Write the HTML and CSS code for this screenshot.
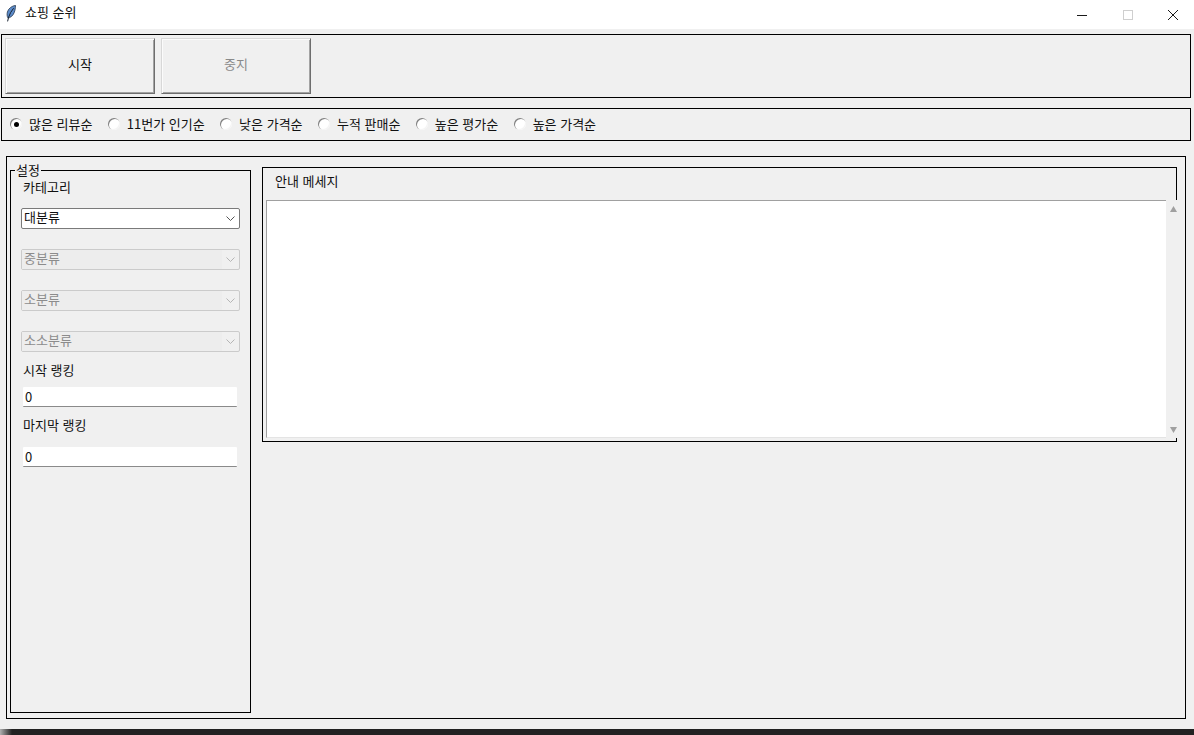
FILE: index.html
```html
<!DOCTYPE html>
<html lang="ko">
<head>
<meta charset="utf-8">
<title>쇼핑 순위</title>
<link rel="stylesheet" href="styles.css">
</head>
<body>
<div class="app">
  <header class="titlebar">
    <svg class="feather" viewBox="0 0 10 17" aria-hidden="true">
      <path class="feather-body" d="M9.5 0.4C6.2 0.8 2.4 3.2 1.4 7C0.9 9.2 1 11.2 1.8 12.8L3.6 12.6C6.6 11.2 8.2 8.4 8.9 5.4C9.3 3.4 9.6 1.6 9.5 0.4Z"/>
      <path class="feather-vein" d="M7.6 3.2L4.6 7.6L2.6 12.2L1.6 16.4"/>
    </svg>
    <span class="title">쇼핑 순위</span>
    <div class="winctl">
      <svg class="winicon winicon-min" viewBox="0 0 10 10" aria-hidden="true"><path class="icon-dark" d="M0 5.5H10"/></svg>
      <svg class="winicon" viewBox="0 0 10 10" aria-hidden="true"><rect class="icon-light" x="0.5" y="0.5" width="9" height="9"/></svg>
      <svg class="winicon" viewBox="0 0 10 10" aria-hidden="true"><path class="icon-dark" d="M0 0L10 10M10 0L0 10"/></svg>
    </div>
  </header>

  <section class="panel actions">
    <button class="btn" type="button">시작</button>
    <button class="btn btn-off" type="button">중지</button>
  </section>

  <section class="panel sorts">
    <label class="radio-item"><span class="radio radio-on"></span>많은 리뷰순</label>
    <label class="radio-item"><span class="radio"></span>11번가 인기순</label>
    <label class="radio-item"><span class="radio"></span>낮은 가격순</label>
    <label class="radio-item"><span class="radio"></span>누적 판매순</label>
    <label class="radio-item"><span class="radio"></span>높은 평가순</label>
    <label class="radio-item"><span class="radio"></span>높은 가격순</label>
  </section>

  <main class="panel workspace">
    <section class="settings">
      <span class="legend">설정</span>
      <div class="lbl">카테고리</div>
      <div class="combo combo-first"><span class="combo-text">대분류</span><span class="combo-arrow"><svg viewBox="0 0 9 5" aria-hidden="true"><path d="M0.5 0.5L4.5 4.5L8.5 0.5"/></svg></span></div>
      <div class="combo combo-off"><span class="combo-text">중분류</span><span class="combo-arrow"><svg viewBox="0 0 9 5" aria-hidden="true"><path d="M0.5 0.5L4.5 4.5L8.5 0.5"/></svg></span></div>
      <div class="combo combo-off"><span class="combo-text">소분류</span><span class="combo-arrow"><svg viewBox="0 0 9 5" aria-hidden="true"><path d="M0.5 0.5L4.5 4.5L8.5 0.5"/></svg></span></div>
      <div class="combo combo-off"><span class="combo-text">소소분류</span><span class="combo-arrow"><svg viewBox="0 0 9 5" aria-hidden="true"><path d="M0.5 0.5L4.5 4.5L8.5 0.5"/></svg></span></div>
      <div class="lbl lbl-start">시작 랭킹</div>
      <div class="entry entry-start">0</div>
      <div class="lbl lbl-end">마지막 랭킹</div>
      <div class="entry entry-end">0</div>
    </section>

    <section class="info">
      <div class="info-title">안내 메세지</div>
      <div class="info-body">
        <div class="textbox"></div>
        <div class="scroll">
          <svg class="arrow" viewBox="0 0 7 6" aria-hidden="true"><path d="M3.5 0L7 6H0Z"/></svg>
          <svg class="arrow" viewBox="0 0 7 6" aria-hidden="true"><path d="M0 0H7L3.5 6Z"/></svg>
        </div>
      </div>
    </section>
  </main>

  <div class="taskbar"></div>
</div>
</body>
</html>
```

FILE: styles.css
```css
* { box-sizing: border-box; }
html, body { margin: 0; height: 100%; }
body {
  background: #f0f0f0;
  color: #111;
  font: 13px/16px "Noto Sans CJK KR", "Noto Sans", sans-serif;
  overflow: hidden;
}
.app { display: flex; flex-direction: column; height: 735px; }

.titlebar {
  display: flex;
  align-items: center;
  height: 29px;
  background: #fff;
  padding: 0 16px 3px 6px;
  flex: none;
}
.feather { width: 10px; height: 17px; flex: none; }
.feather-body { fill: #5c8ccb; stroke: #26364d; stroke-width: 0.8; }
.feather-vein { fill: none; stroke: #15202e; stroke-width: 1; }
.title { margin-left: 9px; line-height: 14px; height: 16px; }
.winctl { margin-left: auto; display: flex; gap: 35px; padding-top: 3px; }
.winicon { width: 10px; height: 10px; display: block; }
.winicon-min { margin-right: 1px; margin-left: -1px; }
.icon-dark { fill: none; stroke: #1a1a1a; stroke-width: 1; }
.icon-light { fill: none; stroke: #cfcfcf; stroke-width: 1; }

.panel { border: 1px solid #000; flex: none; }

.actions {
  display: flex;
  gap: 6px;
  width: 1190px;
  height: 64px;
  margin: 5px 0 0 1px;
  padding: 3px;
}
.btn {
  width: 150px;
  height: 56px;
  padding: 0 0 4px;
  background: #f0f0f0;
  color: #111;
  font: inherit;
  border: 1px solid;
  border-color: #d8d8d8 #6e6e6e #6e6e6e #d8d8d8;
  box-shadow: inset 1px 1px 0 #fbfbfb, inset -1px -1px 0 #a3a3a3;
}
.btn-off { color: #8a8a8a; }

.sorts {
  display: flex;
  align-items: center;
  gap: 15.4px;
  width: 1190px;
  height: 33px;
  margin: 10px 0 0 1px;
  padding: 0 0 1px 8px;
}
.radio-item { display: flex; align-items: center; gap: 7px; }
.radio {
  width: 12px;
  height: 12px;
  border-radius: 50%;
  background: #fff;
  box-shadow: inset 1px 1px 0 #7f7f7f, inset -1px -1px 0 #f4f4f4;
  display: flex;
  align-items: center;
  justify-content: center;
  flex: none;
}
.radio-on::after {
  content: "";
  width: 5px;
  height: 5px;
  border-radius: 50%;
  background: #000;
}

.workspace {
  display: flex;
  align-items: flex-start;
  gap: 11px;
  width: 1180px;
  height: 563px;
  margin: 15px 0 0 6px;
  padding: 10px 8px 0 3px;
}

.settings {
  position: relative;
  width: 241px;
  height: 543px;
  margin-top: 3px;
  border: 1px solid #000;
  padding: 9px 10px 0;
  flex: none;
}
.legend {
  position: absolute;
  left: 4px;
  top: -9px;
  padding: 0 1px;
  background: #f0f0f0;
}
.lbl { margin-left: 2px; height: 16px; line-height: 14px; }
.lbl-start { margin-top: 11px; }
.lbl-end { margin-top: 11px; }

.combo {
  display: flex;
  width: 219px;
  height: 21px;
  margin-top: 20px;
  border: 1px solid #7a7a7a;
  border-radius: 2px;
  background: #fff;
  line-height: 16px;
}
.combo-first { margin-top: 12px; }
.combo-text { flex: 1; padding-left: 2px; }
.combo-arrow {
  width: 17px;
  display: flex;
  align-items: center;
  justify-content: center;
}
.combo-arrow svg { width: 9px; height: 5px; display: block; }
.combo-arrow path { fill: none; stroke: #555; stroke-width: 1; }
.combo-off { border-color: #cbcbcb; background: #f0f0f0; color: #8c8c8c; }
.combo-off .combo-text { background: #ededed; }
.combo-off .combo-arrow path { stroke: #b5b5b5; }

.entry {
  width: 214px;
  height: 20px;
  margin-left: 2px;
  padding-left: 2px;
  background: #fff;
  border-bottom: 1px solid #8a8a8a;
  border-radius: 1px;
  line-height: 19px;
}
.entry-start { margin-top: 8px; }
.entry-end { margin-top: 13px; }

.info {
  width: 915px;
  height: 275px;
  border: 1px solid #000;
  padding: 6px 0 3px 3px;
  flex: none;
}
.info-title { margin-left: 9px; height: 16px; line-height: 14px; }
.info-body {
  display: flex;
  height: 238px;
  margin: 10px -1px 0 0;
  position: relative;
}
.textbox {
  flex: 1;
  background: #fff;
  border-top: 1px solid #a0a0a0;
  border-left: 1px solid #a0a0a0;
  border-bottom: 1px solid #e4e4e4;
}
.scroll {
  width: 11px;
  background: #f0f0f0;
  display: flex;
  flex-direction: column;
  justify-content: space-between;
  align-items: flex-end;
  padding: 6px 0 5px;
}
.arrow { width: 7px; height: 6px; display: block; }
.arrow path { fill: #a0a0a0; }

.taskbar {
  margin-top: auto;
  height: 6px;
  flex: none;
  background: linear-gradient(90deg, #b0b0b0, #222 12px);
}
```
